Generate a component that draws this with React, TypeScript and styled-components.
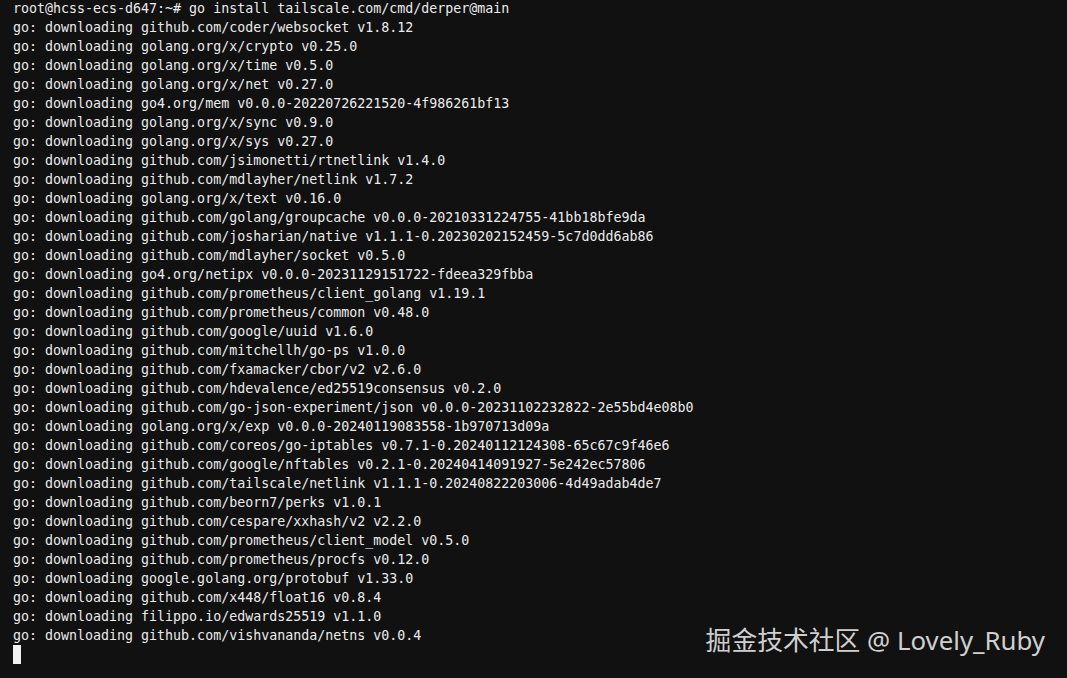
import React from "react";
import styled, { createGlobalStyle } from "styled-components";

const Global = createGlobalStyle`
  html, body { margin: 0; padding: 0; background: #111111; }
  #root { min-height: 100vh; }
`;

const Screen = styled.div`
  position: relative;
  width: 1067px;
  height: 678px;
  background: #111111;
  overflow: hidden;
  box-sizing: border-box;
  padding: 0 0 0 13px;
`;

const Output = styled.pre`
  margin: -1px 0 0 0;
  font-family: "DejaVu Sans Mono", "Liberation Mono", monospace;
  font-size: 13.3px;
  line-height: 19px;
  color: #ebebeb;
  white-space: pre;
`;

const Line = styled.div`
  height: 19px;
`;

const Cursor = styled.span`
  display: inline-block;
  width: 8px;
  height: 19px;
  margin-top: 0;
  background: #f2f2f2;
`;

const Watermark = styled.div`
  position: absolute;
  right: 22px;
  bottom: 24px;
  font-family: "Noto Sans", "Noto Sans CJK SC", sans-serif;
  font-size: 25.8px;
  line-height: 1;
  color: #cfcfcf;
`;

const lines = [
  "root@hcss-ecs-d647:~# go install tailscale.com/cmd/derper@main",
  "go: downloading github.com/coder/websocket v1.8.12",
  "go: downloading golang.org/x/crypto v0.25.0",
  "go: downloading golang.org/x/time v0.5.0",
  "go: downloading golang.org/x/net v0.27.0",
  "go: downloading go4.org/mem v0.0.0-20220726221520-4f986261bf13",
  "go: downloading golang.org/x/sync v0.9.0",
  "go: downloading golang.org/x/sys v0.27.0",
  "go: downloading github.com/jsimonetti/rtnetlink v1.4.0",
  "go: downloading github.com/mdlayher/netlink v1.7.2",
  "go: downloading golang.org/x/text v0.16.0",
  "go: downloading github.com/golang/groupcache v0.0.0-20210331224755-41bb18bfe9da",
  "go: downloading github.com/josharian/native v1.1.1-0.20230202152459-5c7d0dd6ab86",
  "go: downloading github.com/mdlayher/socket v0.5.0",
  "go: downloading go4.org/netipx v0.0.0-20231129151722-fdeea329fbba",
  "go: downloading github.com/prometheus/client_golang v1.19.1",
  "go: downloading github.com/prometheus/common v0.48.0",
  "go: downloading github.com/google/uuid v1.6.0",
  "go: downloading github.com/mitchellh/go-ps v1.0.0",
  "go: downloading github.com/fxamacker/cbor/v2 v2.6.0",
  "go: downloading github.com/hdevalence/ed25519consensus v0.2.0",
  "go: downloading github.com/go-json-experiment/json v0.0.0-20231102232822-2e55bd4e08b0",
  "go: downloading golang.org/x/exp v0.0.0-20240119083558-1b970713d09a",
  "go: downloading github.com/coreos/go-iptables v0.7.1-0.20240112124308-65c67c9f46e6",
  "go: downloading github.com/google/nftables v0.2.1-0.20240414091927-5e242ec57806",
  "go: downloading github.com/tailscale/netlink v1.1.1-0.20240822203006-4d49adab4de7",
  "go: downloading github.com/beorn7/perks v1.0.1",
  "go: downloading github.com/cespare/xxhash/v2 v2.2.0",
  "go: downloading github.com/prometheus/client_model v0.5.0",
  "go: downloading github.com/prometheus/procfs v0.12.0",
  "go: downloading google.golang.org/protobuf v1.33.0",
  "go: downloading github.com/x448/float16 v0.8.4",
  "go: downloading filippo.io/edwards25519 v1.1.0",
  "go: downloading github.com/vishvananda/netns v0.0.4",
];

export default function App() {
  return (
    <>
      <Global />
      <Screen>
        <Output>
          {lines.map((l, i) => (
            <Line key={i}>{l}</Line>
          ))}
          <Line>
            <Cursor />
          </Line>
        </Output>
        <Watermark>掘金技术社区 @ Lovely_Ruby</Watermark>
      </Screen>
    </>
  );
}
